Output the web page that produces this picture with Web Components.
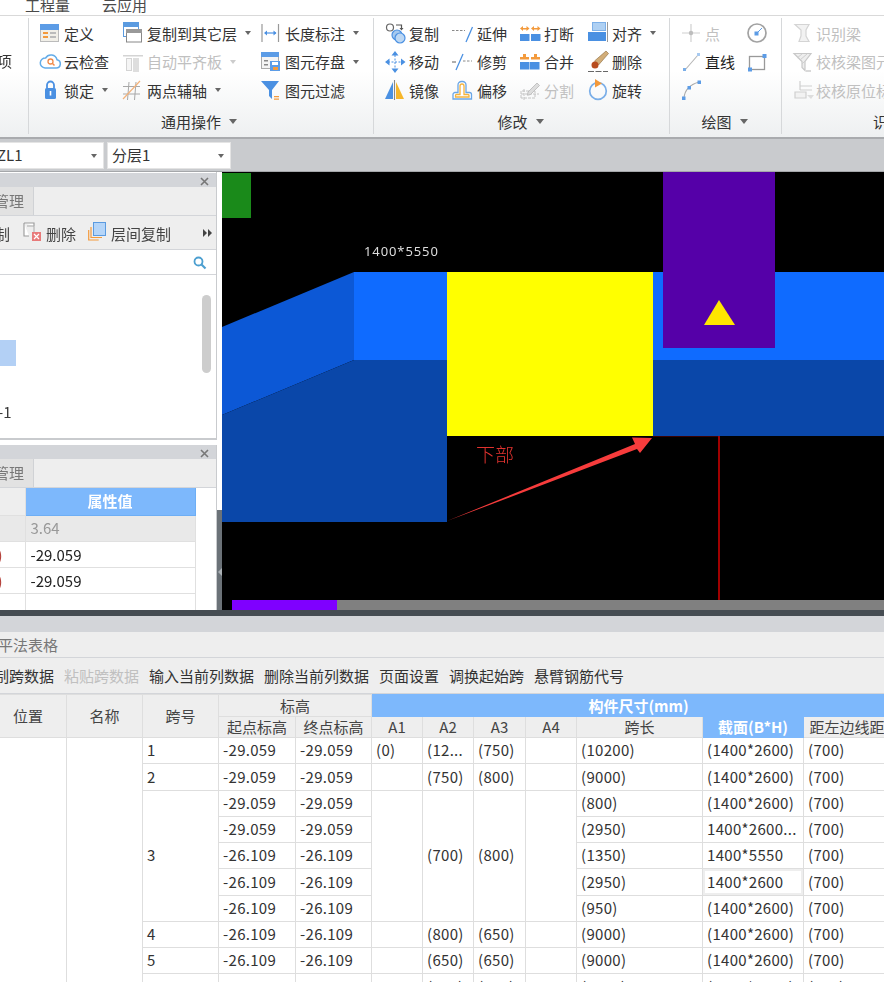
<!DOCTYPE html>
<html lang="zh-CN">
<head>
<meta charset="utf-8">
<title>GTJ</title>
<style>
html,body{margin:0;padding:0;background:#fff;overflow:hidden}
body{width:884px;height:982px;font:15px "Noto Sans CJK SC","Noto Sans",sans-serif;color:#333}
</style>
</head>
<body>
<gl-app></gl-app>
<script>
const FONT='"Noto Sans CJK SC","Noto Sans",sans-serif';
function el(name,css,html,extra){
  customElements.define(name,class extends HTMLElement{
    connectedCallback(){
      if(this.shadowRoot)return;
      const r=this.attachShadow({mode:'open'});
      r.innerHTML='<style>'+css+'</style>'+(typeof html==='function'?html(this):html);
    }
  });
}
const B='#4a90e2',O='#f39a3c',G='#a8a8a8',L='#cfcfcf';
const ICONS={
 def:`<rect x=".5" y="2.5" width="18" height="17" fill="#f1efe8" stroke="#bbb"/><rect y="2" width="19" height="6" fill="#5c9ce6"/><path d="M3 10h5v2H3zM3 14h5v2H3z" fill="${O}"/><path d="M10 10h6v2h-6zM10 14h6v2h-6z" fill="#bbb"/>`,
 cloud:`<path d="M5 17h11a4.2 4.2 0 0 0 1-8.3A6.2 6.2 0 0 0 5.600 7 5 5 0 0 0 5 17z" fill="#fff" stroke="#63ace9" stroke-width="1.500"/><circle cx="10.500" cy="10.500" r="2.500" fill="none" stroke="#ef8a4a" stroke-width="1.300"/><path d="M12.500 12.500l2 2" stroke="#ef8a4a" stroke-width="1.500"/>`,
 lock:`<rect x="5" y="9" width="11" height="11" rx="1.500" fill="${B}"/><path d="M7 9V6a3.500 3.500 0 0 1 7 0v3" fill="none" stroke="${B}" stroke-width="1.800"/><rect x="9.700" y="12" width="1.600" height="4.500" fill="#fff"/>`,
 copylayer:`<rect x="1.500" y=".5" width="15" height="14" fill="#fff" stroke="#5b9be0"/><rect x="1" width="16" height="5" fill="#5b9be0"/><rect x="4.500" y="7.500" width="15" height="12.500" fill="#fff" stroke="#888"/><rect x="4" y="7" width="16" height="4" fill="#999"/>`,
 autoflat:`<rect x="1" y="4" width="20" height="1.500" fill="#d4d4d4"/><rect x="4.500" y="7.500" width="5" height="12" fill="#f5f5f5" stroke="#d4d4d4"/><rect x="11" y="7" width="6" height="14" fill="#dedede"/>`,
 axis:`<path d="M1 7.500h17M1 15h17M7 3l-1.500 18M14 3l-1.500 18" stroke="${G}" fill="none"/><path d="M1 20L18 2" stroke="#f3b27a" stroke-width="1.200"/>`,
 dim:`<path d="M1 2v18M17.500 2v18" stroke="#999" stroke-width="1.200"/><path d="M4 11h11" stroke="${B}" stroke-width="1.200"/><path d="M3 11l3-2.500v5zM15.500 11l-3-2.500v5z" fill="${B}"/>`,
 save:`<rect x=".5" y="1.500" width="17" height="16" fill="#f4f4f4" stroke="#aaa"/><rect y="1" width="18" height="5" fill="#5c9ce6"/><path d="M3 9h4v1.500H3zM3 13h4v1.500H3z" fill="#888"/><rect x="9" y="10" width="10" height="10" fill="#5c9ce6"/><rect x="11" y="11" width="6" height="3" fill="#fff"/><rect x="12" y="16" width="5" height="3" fill="${O}"/>`,
 funnel:`<path d="M0 2h18l-7 9v9l-3-3v-6z" fill="${B}"/><path d="M13 17h5v1.300h-5zM13 19.500h5v1.300h-5z" fill="${O}"/>`,
 copy:`<circle cx="5" cy="5.500" r="3.500" fill="#fff" stroke="#666" stroke-width="1.200"/><path d="M11 3h5.500v4" fill="none" stroke="#555" stroke-width="1.200"/><path d="M14.500 6l2 2.500 2-2.500z" fill="#555"/><circle cx="12" cy="13" r="5" fill="#a6c9ee" stroke="${B}" stroke-width="1.200"/><circle cx="15" cy="16" r="5" fill="#bcd7f3" stroke="${B}" stroke-width="1.200"/>`,
 extend:`<path d="M0 8.500h13" stroke="#8a8a8a" stroke-dasharray="2.500 1.500"/><path d="M14 20l6.500-15" stroke="${B}" stroke-width="1.300"/>`,
 brk:`<rect y="12" width="9.500" height="7" fill="${B}"/><rect x="11" y="12" width="9.500" height="7" fill="${B}"/><path d="M0 6.500L3 4v2h3.500V4l3 2.500-3 2.500V7.500H3V9zM11 6.500L14 4v2h3.500V4l3 2.500-3 2.500V7.500H14V9z" fill="${O}"/>`,
 align:`<rect x="4.500" y=".5" width="13" height="8" fill="#aed0f3" stroke="#7db0e8"/><rect y="10" width="18" height="9" fill="${B}"/><path d="M19.500 0v20" stroke="#999"/>`,
 move:`<path d="M10 4v14M3 11h14" stroke="${B}" stroke-dasharray="2 1.500"/><path d="M10 0l3.500 4.500h-7zM10 22l3.500-4.500h-7zM0 11l4.500-3.500v7zM20.500 11L16 7.500v7z" fill="${B}"/>`,
 trim:`<path d="M0 11h4" stroke="#777" stroke-width="1.200"/><path d="M11 10h9" stroke="#8a8a8a" stroke-dasharray="2.500 1.500"/><path d="M4 19l7-16" stroke="${B}" stroke-width="1.300"/>`,
 merge:`<rect y="11" width="9.500" height="7.500" fill="${B}"/><rect x="10" y="11" width="9.500" height="7.500" fill="${B}"/><path d="M0 6h3V3h3v3h3v2.500H0zM11 6h3V3h3v3h3v2.500h-9z" fill="${O}"/>`,
 brush:`<path d="M18 0l2.500 2.500L10.500 14 6.500 10z" fill="#d2ad78" stroke="#8c6a3a" stroke-width=".6"/><circle cx="7" cy="14" r="3.500" fill="#b84d1f"/><path d="M0 20.500h20" stroke="#666" stroke-dasharray="6 1.500" stroke-width="1.100"/>`,
 mirror:`<path d="M0 20L8 3v17z" fill="${B}"/><path d="M9.500 1v20" stroke="#888" stroke-width="1.100"/><path d="M11 3l8 17h-8z" fill="#f6b62a"/>`,
 offset:`<path d="M1 20v-4.500a2 2 0 0 1 2-2h3V6a3.500 3.500 0 0 1 3.500-3.500h1A3.500 3.500 0 0 1 14 6v7.500h3.500a2 2 0 0 1 2 2V20z" fill="#fff" stroke="#6aa6e6" stroke-width="1.300"/><path d="M3.500 18v-1.500a1 1 0 0 1 1-1H8V7a2 2 0 0 1 2-2 2 2 0 0 1 2 2v8.500h4a1 1 0 0 1 1 1V18z" fill="#fff" stroke="#f4b33d" stroke-width="1.300"/>`,
 split:`<path d="M1 19V12h14v7zM1 15h18M4 10v11" fill="none" stroke="#c4c4c4" stroke-dasharray="3 1"/><path d="M8 13l9-9 2.500 2.500-9 9-3 .8z" fill="#ddd" stroke="#b0b0b0" stroke-width=".7"/>`,
 rotate:`<circle cx="10" cy="12" r="8.300" fill="none" stroke="#7aaee8" stroke-width="1.700"/><path d="M7 0l7 4.500-7 4z" fill="${O}"/>`,
 point:`<path d="M0 11h18M9 2v18" stroke="#d0d0d0" stroke-width="1.200"/><circle cx="9" cy="11" r="2.200" fill="#bdbdbd"/>`,
 circle:`<circle cx="10" cy="11" r="9" fill="#fff" stroke="#a2a2a2" stroke-width="1.700"/><path d="M10 11l5-5" stroke="#5c9ce6"/><rect x="7.500" y="9.500" width="4" height="4" fill="#5c9ce6"/>`,
 line:`<path d="M3 19L16 4" stroke="#b5b5b5" stroke-width="1.100"/><rect x="1" y="17" width="3" height="3" fill="#7aaee8"/><rect x="15" y="2" width="3" height="3" fill="#a8caf0"/>`,
 box:`<rect x="2.500" y="5.500" width="15" height="13" fill="#fff" stroke="#999" stroke-width="1.300"/><rect x="15.500" y="3" width="4" height="4" fill="#5c9ce6"/><rect x="1" y="16.500" width="4" height="4" fill="#5c9ce6"/>`,
 arc:`<path d="M2 19Q3 7 17 3" fill="none" stroke="#aaa" stroke-width="1.100"/><rect y="17.500" width="3.500" height="3.500" fill="#5c9ce6"/><rect x="5.500" y="7" width="3.500" height="3.500" fill="#5c9ce6"/><rect x="15.500" y="1.500" width="3.500" height="3.500" fill="#5c9ce6"/>`,
 rbeam:`<path d="M1 2.500h14l-3 5.500v6l3 5.500H5l2-5.500V8z" fill="#f2f2f2" stroke="#d4d4d4" stroke-width="1.200"/>`,
 rcheck:`<path d="M0 2.500h17l-6 8v9l-3-3v-6z" fill="#eee" stroke="#c8c8c8" stroke-width="1.200"/><path d="M3 7l5-4M6 9l7-6M8 13l3-3" stroke="#cfcfcf"/><path d="M12 20h5" stroke="#ccc" stroke-width="1.500"/>`,
 rpos:`<path d="M1 13h11v6H1z" fill="#f2f2f2" stroke="#cfcfcf" stroke-width="1.200"/><path d="M6 2v9M6 7h12M6 11h12" stroke="#cfcfcf" stroke-width="1.200" fill="none"/><path d="M13 16h7l-3 4z" fill="#ddd"/>`,
 del:`<path d="M1 1h10v3M1 1v13h5" fill="#fff" stroke="#999" stroke-width="1.100"/><path d="M4 4h7v10" fill="none" stroke="#aaa"/><rect x="9" y="10" width="9" height="9" fill="#e87a7a"/><path d="M11 12l5 5M16 12l-5 5" stroke="#fff" stroke-width="1.200"/>`,
 layer:`<rect x="5.500" y=".5" width="12" height="13" fill="#b5d5f8" stroke="#5b9be0"/><path d="M3 5v10.500h11M.7 8v10h10" fill="none" stroke="${O}" stroke-width="1.200"/>`,
 search:`<circle cx="5.500" cy="5.500" r="4" fill="none" stroke="#4c9fd0" stroke-width="1.800"/><path d="M8.500 8.500l4 4" stroke="#4c9fd0" stroke-width="2.200"/>`
};
const svg=(n,w=22,h=22)=>`<svg width="${w}" height="${h}" viewBox="0 0 ${w} ${h}" style="overflow:visible;display:block">${ICONS[n]}</svg>`;

el('gl-tool',`:host{display:flex;align-items:center;height:100%;white-space:nowrap;font:15px ${FONT};color:#333}
:host([off]){color:#c0c0c0}
.i{flex:none;height:22px;margin-right:3px}
.a{width:0;height:0;border:3.500px solid transparent;border-top:4px solid #666;border-bottom:0;margin-left:8px}
:host([off]) .a{border-top-color:#ccc}
:host([strong]){color:#1c1c1c}`,
 t=>`<span class="i" style="width:${t.getAttribute('w')||21}px">${svg(t.getAttribute('icon'))}</span><span>${t.getAttribute('label')||''}</span>${t.hasAttribute('arrow')?'<span class="a"></span>':''}`);

el('gl-group',`:host{display:flex;flex-direction:column;flex:none;box-sizing:border-box;height:116px;border-right:1px solid #d6d8da;overflow:hidden}
.tools{display:grid;grid-template-rows:repeat(3,28.5px);padding-top:1px;height:88px;box-sizing:border-box}
.lab{flex:1;display:flex;align-items:center;justify-content:center;font:15px ${FONT};color:#333;white-space:nowrap;padding-top:2px;box-sizing:border-box}
.a{width:0;height:0;border:4px solid transparent;border-top:5px solid #666;border-bottom:0;margin-left:8px}`,
 t=>`<div class="tools" style="grid-template-columns:${t.getAttribute('cols')};padding-left:${t.getAttribute('pad')}px"><slot></slot></div>
 <div class="lab" style="${t.getAttribute('labstyle')||''}"><span>${t.getAttribute('label')}</span>${t.hasAttribute('noarrow')?'':'<span class="a"></span>'}</div>`);

el('gl-topbar',`:host{display:flex;box-sizing:border-box;height:16px;border-bottom:1px solid #d9d9d9;background:#fff;overflow:hidden;font:15px/10px ${FONT};color:#4a4a4a;padding-left:25px;gap:32px}`,
 `<span>工程量</span><span>云应用</span>`);

el('gl-ribbon',`:host{display:flex;box-sizing:border-box;height:123px;padding:2px 0 3px;overflow:hidden;background:linear-gradient(#fff 45%,#eef0f1);border-bottom:2px solid #a9abae}
.z{width:29px;box-sizing:border-box;height:116px;border-right:1px solid #d6d8da;overflow:hidden;position:relative;font:15px ${FONT};color:#333}
.z span{display:block;margin:32px 0 0 -18px;white-space:nowrap}`,
 `<div class="z"><span>选项</span></div>
 <gl-group label="通用操作" pad="11" cols="82px 139px 1fr" labstyle="padding-right:4px" style="width:345px">
  <gl-tool icon="def" w="21" label="定义"></gl-tool><gl-tool icon="copylayer" w="22" label="复制到其它层" arrow></gl-tool><gl-tool icon="dim" w="21" label="长度标注" arrow></gl-tool>
  <gl-tool icon="cloud" w="21" label="云检查"></gl-tool><gl-tool icon="autoflat" w="22" label="自动平齐板" arrow off></gl-tool><gl-tool icon="save" w="21" label="图元存盘" arrow></gl-tool>
  <gl-tool icon="lock" w="21" label="锁定" arrow></gl-tool><gl-tool icon="axis" w="22" label="两点辅轴" arrow></gl-tool><gl-tool icon="funnel" w="21" label="图元过滤"></gl-tool>
 </gl-group>
 <gl-group label="修改" pad="11" cols="67px 68px 68px 1fr" labstyle="padding-right:2px" style="width:296px">
  <gl-tool icon="copy" label="复制"></gl-tool><gl-tool icon="extend" w="22" label="延伸"></gl-tool><gl-tool icon="brk" label="打断"></gl-tool><gl-tool icon="align" label="对齐" arrow></gl-tool>
  <gl-tool icon="move" label="移动"></gl-tool><gl-tool icon="trim" w="22" label="修剪"></gl-tool><gl-tool icon="merge" label="合并"></gl-tool><gl-tool icon="brush" label="删除"></gl-tool>
  <gl-tool icon="mirror" label="镜像"></gl-tool><gl-tool icon="offset" w="22" label="偏移"></gl-tool><gl-tool icon="split" label="分割" off></gl-tool><gl-tool icon="rotate" label="旋转"></gl-tool>
 </gl-group>
 <gl-group label="绘图" pad="12" cols="65px 1fr" labstyle="padding-right:2px" style="width:112px">
  <gl-tool icon="point" w="20" label="点" off></gl-tool><gl-tool icon="circle" w="22"></gl-tool>
  <gl-tool icon="line" w="20" label="直线" strong></gl-tool><gl-tool icon="box" w="22"></gl-tool>
  <gl-tool icon="arc" w="20"></gl-tool><span></span>
 </gl-group>
 <gl-group label="识别梁" noarrow pad="12" cols="1fr" labstyle="justify-content:flex-start;padding-left:91px" style="width:102px;border:0">
  <gl-tool icon="rbeam" w="19" label="识别梁" off></gl-tool>
  <gl-tool icon="rcheck" w="19" label="校核梁图元" off></gl-tool>
  <gl-tool icon="rpos" w="19" label="校核原位标注" off></gl-tool>
 </gl-group>`);

el('gl-combo',`:host{display:flex;align-items:center;box-sizing:border-box;height:27px;background:#fff;border:1px solid #e4e4e4;font:15px ${FONT};color:#333;overflow:hidden;flex:none;white-space:nowrap;padding-bottom:2px}
span{flex:1}i{width:0;height:0;border:3.500px solid transparent;border-top:4px solid #666;border-bottom:0;margin:2px 6px 0 0}`,
 t=>`<span style="padding-left:${t.getAttribute('pl')}px">${t.getAttribute('text')}</span><i></i>`);

el('gl-combobar',`:host{display:flex;align-items:flex-start;gap:3px;box-sizing:border-box;height:33px;padding-top:3px;background:#c9cbce;border-bottom:1px solid #a5a7aa}`,
 `<gl-combo text="ZL1" pl="0" style="width:108px;margin-left:-4px"></gl-combo><gl-combo text="分层1" pl="4" style="width:124px"></gl-combo>`);

el('gl-panel',`:host{display:flex;flex-direction:column;box-sizing:border-box;width:217px;border-right:1px solid #c9cbce;background:#fff;overflow:hidden;font:15px ${FONT}}
.h{flex:none;height:14px;background:#d3d5d9;position:relative;margin-top:var(--mt,1px)}
.h svg{position:absolute;right:7px;top:4px}
.t{flex:none;box-sizing:border-box;height:29px;background:#eee;border-bottom:1px solid #d3d5d9;display:flex}
.t span{width:34px;background:#e2e2e2;border-right:1px solid #d0d2d5;box-sizing:border-box;color:#777;white-space:nowrap;direction:rtl;padding-left:0;line-height:28px;overflow:hidden}
.c{flex:1;min-height:0;display:flex;flex-direction:column}`,
 t=>`<div class="h"><svg width="9" height="9"><path d="M1 1l7 7M8 1L1 8" stroke="#777" stroke-width="1.600"/></svg></div>
 <div class="t"><span><b style="font-weight:400;margin-right:9px">管理</b></span></div><div class="c"><slot></slot></div>`);

el('gl-tree',`:host{display:flex;flex-direction:column;flex:1;min-height:0;font:15px ${FONT};color:#333}
.bar{flex:none;box-sizing:border-box;height:34px;background:#eee;border-bottom:1px solid #d3d5d9;display:flex;align-items:center;white-space:nowrap;color:#444;padding:1px 0 0}
.bar .clip{margin-left:-20px;width:30px}
.bar .ic{margin-left:13px;width:23px;height:22px;flex:none}
.bar .tx{width:30px;flex:none}
.bar .ic2{margin-left:12px;width:23px;height:22px;flex:none}
.bar .more{margin-left:32px;display:block}
.s{flex:none;box-sizing:border-box;height:25px;border-bottom:1px solid #d3d5d9;display:flex;justify-content:flex-end;align-items:center;padding-right:10px}
.b{flex:1;min-height:0;position:relative;border-bottom:2px solid #c9cbce;padding-top:65px}
.sel{width:16px;height:26px;background:#b3d0f5}
.n{margin:33px 0 0 -2px;line-height:26px;color:#3a3a3a}
.sb{position:absolute;right:5px;top:20px;width:9px;height:78px;border-radius:5px;background:#cdcdcd}`,
 `<div class="bar"><span class="clip">复制</span><span class="ic">${svg('del')}</span><span class="tx">删除</span><span class="ic2">${svg('layer')}</span><span>层间复制</span><svg class="more" width="9" height="8"><path d="M0 0l4 4-4 4zM5 0l4 4-4 4z" fill="#444"/></svg></div>
 <div class="s">${svg('search',13,13)}</div>
 <div class="b"><div class="sel"></div><div class="n">-1</div><div class="sb"></div></div>`);

el('gl-props',`:host{display:block;flex:1;min-height:0;overflow:hidden;font:15px ${FONT};color:#222}
table{border-collapse:collapse;table-layout:fixed;width:195px}
td,th{padding:0 0 0 5px;height:26px;border:1px solid #e0e0e0;box-sizing:border-box;font-weight:400;text-align:left;white-space:nowrap;overflow:hidden}
tr:first-child>*{border-top:0}
tr>*:first-child{border-left:0}
th.v{background:#7db8fc;color:#fff;text-align:center;font-weight:700;border-color:#6daef5;height:27px;padding:0 0 2px}
th.k{background:#eee}
.g td{background:#e9e9e9;color:#999;padding-bottom:2px}
.k1{color:#b5423c;text-indent:-16px;padding:0}`,
 `<table><col style="width:25px"><col style="width:170px">
 <tr><th class="k"></th><th class="v">属性值</th></tr>
 <tr class="g"><td></td><td>3.64</td></tr>
 <tr><td class="k1">(0)</td><td>-29.059</td></tr>
 <tr><td class="k1">(0)</td><td>-29.059</td></tr>
 <tr><td></td><td></td></tr></table>`);

el('gl-viewport',`:host{display:block;position:relative;flex:1;background:#000;overflow:hidden}
svg{position:absolute;left:0;top:0}
.d{position:absolute;left:142px;top:69px;font:13px "Noto Sans",sans-serif;letter-spacing:.9px;color:#ddd;line-height:20px}
.x{position:absolute;left:254px;top:269px;font:300 19px ${FONT};color:#e0322e;line-height:26px}`,
 `<svg width="662" height="438" viewBox="222 172 662 438">
  <rect x="222" y="173" width="29" height="45" fill="#1a8a1a"/>
  <path d="M222 327L354 272V360L222 415z" fill="#0c58d6"/>
  <rect x="354" y="272" width="530" height="88" fill="#0f6bff"/>
  <path d="M222 415L354 360H884V436H447V522H222z" fill="#0a47a9"/>
  <rect x="447" y="272" width="206" height="164" fill="#ff0"/>
  <rect x="663" y="172" width="112" height="176" fill="#5500a8"/>
  <path d="M719 300L735 325H704z" fill="#ffe600"/>
  <path d="M653 436.500H719" stroke="#3a0000" fill="none"/>
  <rect x="718" y="436" width="2" height="164" fill="#a00000"/>
  <rect x="232" y="600" width="652" height="10" fill="#808080"/>
  <rect x="232" y="600" width="105" height="10" fill="#7f00ff"/>
  <path d="M447 521L635 444L632 437.500L652 438L640 453L637 449z" fill="#f73c3c"/>
 </svg>
 <span class="d">1400*5550</span><span class="x">下部</span>`);

function sheet(){
 const a='(1400*2600)';
 const rows=[
  ['1','-29.059','-29.059','(0)','(12...','(750)','','(10200)',a],
  ['2','-29.059','-29.059','','(750)','(800)','','(9000)',a],
  ['3','-29.059','-29.059','','(700)','(800)','','(800)',a],
  [null,'-29.059','-29.059',null,null,null,null,'(2950)','1400*2600...'],
  [null,'-26.109','-26.109',null,null,null,null,'(1350)','1400*5550'],
  [null,'-26.109','-26.109',null,null,null,null,'(2950)','1400*2600'],
  [null,'-26.109','-26.109',null,null,null,null,'(950)',a],
  ['4','-26.109','-26.109','','(800)','(650)','','(9000)',a],
  ['5','-26.109','-26.109','','(650)','(650)','','(9000)',a],
  ['6','-26.109','-26.109','','(650)','(800)','','(9000)',a]
 ];
 let h=rows.map((r,i)=>{
  let s='<tr>';
  if(i===0)s+='<td rowspan="10"></td><td rowspan="10"></td>';
  const span=i===2?' rowspan="5"':'';
  r.forEach((c,j)=>{
   if(c===null)return;
   const sp=(j===0||(j>=3&&j<=6))?span:'';
   const cl=(i===5&&j===8)?' class="sel"':'';
   s+=`<td${sp}${cl}>${c}</td>`;
  });
  return s+'<td>(700)</td></tr>';
 }).join('');
 return `<div class="title"><span>平法表格</span></div>
 <div class="bar"><span>复制跨数据</span><span class="off">粘贴跨数据</span><span>输入当前列数据</span><span>删除当前列数据</span><span>页面设置</span><span>调换起始跨</span><span>悬臂钢筋代号</span></div>
 <div class="w"><table>
 ${[77,76,76,77,76,51,51,52,51,126,101,102].map(w=>`<col style="width:${w}px">`).join('')}
 <thead><tr class="h1"><th rowspan="2">位置</th><th rowspan="2">名称</th><th rowspan="2">跨号</th><th colspan="2">标高</th><th colspan="7" class="blue">构件尺寸(mm)</th></tr>
 <tr class="h2"><th>起点标高</th><th>终点标高</th><th>A1</th><th>A2</th><th>A3</th><th>A4</th><th>跨长</th><th class="blue">截面(B*H)</th><th>距左边线距离</th></tr></thead>
 <tbody>${h}</tbody></table></div>`;
}
el('gl-sheet',`:host{display:flex;flex-direction:column;height:372px;overflow:hidden;font:15px ${FONT};color:#333;background:#fff}
.dark{flex:none;height:6px;background:#454c52}
.gr{flex:none;height:16px;background:#d3d5d9}
.title{flex:none;box-sizing:border-box;height:26px;background:#eee;border-bottom:1px solid #d3d5d9;color:#777;line-height:25px;white-space:nowrap}
.title span{margin-left:-2px;display:inline-block}
.bar{flex:none;box-sizing:border-box;height:36px;background:#eee;border-bottom:1px solid #d3d5d9;display:flex;gap:10px;align-items:center;white-space:nowrap;margin-left:0;color:#333;padding-left:0}
.bar span:first-child{margin-left:-21px}
.off{color:#c0c0c0}
.w{flex:1;min-height:0;overflow:hidden}
table{border-collapse:collapse;table-layout:fixed;width:916px;margin-left:-11px}
th,td{border:1px solid #dedede;box-sizing:border-box;padding:0 0 0 4px;white-space:nowrap;overflow:hidden;font-weight:400;letter-spacing:.3px}
th{background:#eee;text-align:center;padding:0 0 1px;color:#444;letter-spacing:0}
.h1>*{height:22px;line-height:19px}.h2>*{height:21px;line-height:19px}
th.blue{background:#7db8fc;color:#fff;font-weight:700;border-color:#7db8fc}
td{height:26.25px;line-height:24px;color:#333;padding-bottom:.5px}
td.sel{box-shadow:inset 0 0 0 2px #eee}`,
 `<div class="dark"></div><div class="gr"></div>`+sheet());

el('gl-app',`:host{display:flex;flex-direction:column;width:884px;height:982px;overflow:hidden;filter:blur(.4px)}
.m{display:flex;height:438px;flex:none}
.l{display:flex;flex:none;width:222px;background:#fff}
.ps{width:217px;display:flex;flex-direction:column;gap:5px}
.st{width:5px;display:flex;flex-direction:column}
.st i{flex:1;background:#fff}
.st b{flex:none;height:100px;background:#6b7278;display:flex;align-items:center;justify-content:center;padding-top:24px;box-sizing:border-box}`,
 `<gl-topbar></gl-topbar><gl-ribbon></gl-ribbon><gl-combobar></gl-combobar>
 <div class="m"><div class="l"><div class="ps">
  <gl-panel style="height:268px"><gl-tree></gl-tree></gl-panel>
  <gl-panel style="height:165px;--mt:0px"><gl-props></gl-props></gl-panel>
 </div><div class="st"><i></i><b><svg width="4" height="8"><path d="M4 0v8L0 4z" fill="#aab0b5"/></svg></b></div></div>
 <gl-viewport></gl-viewport></div>
 <gl-sheet></gl-sheet>`);
</script>
</body>
</html>
